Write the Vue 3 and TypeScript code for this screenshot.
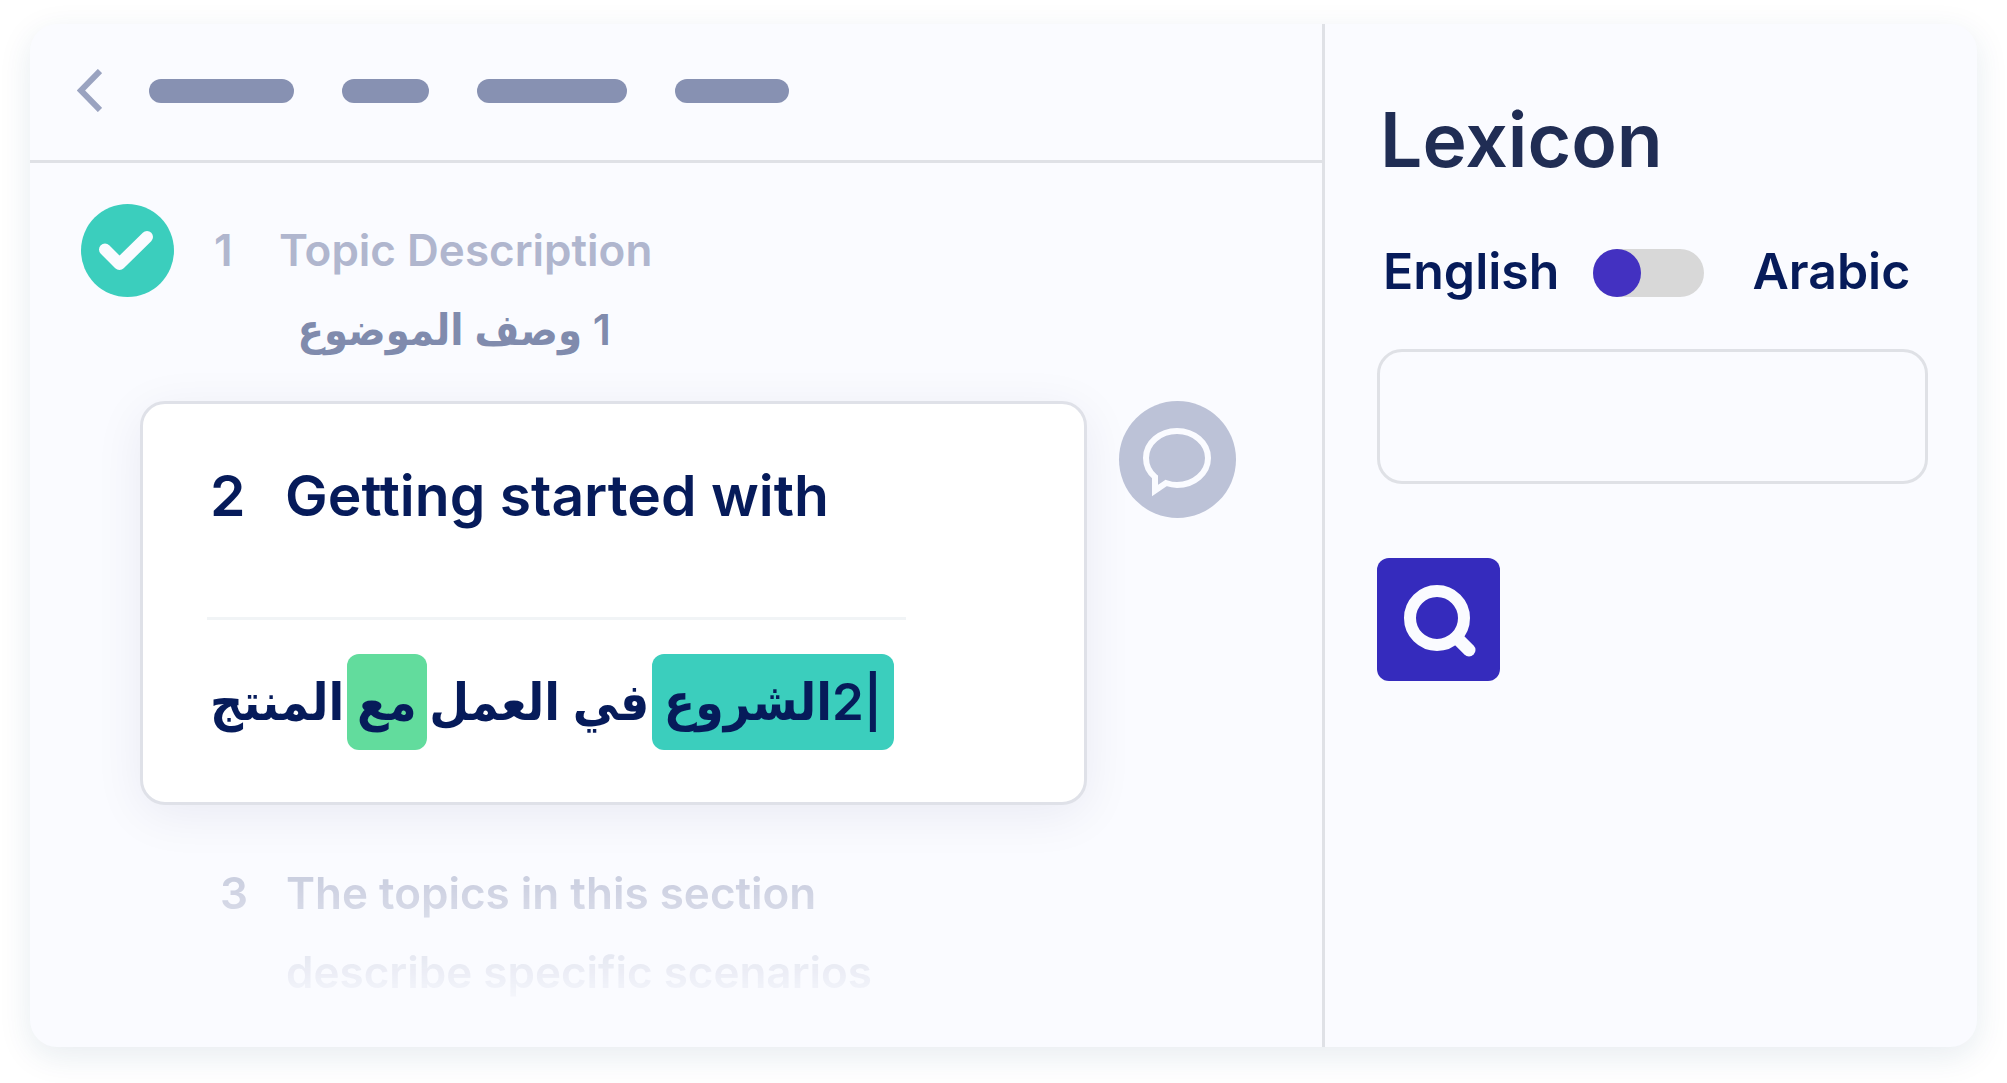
<script setup lang="ts">
import { ref } from 'vue'

interface Token {
  text: string
  mark?: 'teal' | 'green'
}

const crumbs: string[] = ['long', 'short', 'longest', 'medium']

const translation: Token[] = [
  { text: '|2الشروع', mark: 'teal' },
  { text: 'في العمل' },
  { text: 'مع', mark: 'green' },
  { text: 'المنتج' },
]

const toArabic = ref<boolean>(false)
const term = ref<string>('')
</script>

<template>
  <div class="app">
    <main class="editor">
      <header class="topbar">
        <button class="back" type="button" aria-label="Back">
          <svg width="25" height="43" viewBox="0 0 25 43">
            <path d="M23 2 L4 21.500 L23 41" fill="none" stroke="#9aa3c0" stroke-width="6" />
          </svg>
        </button>
        <nav class="crumbs">
          <span v-for="c in crumbs" :key="c" class="crumb" :class="c"></span>
        </nav>
      </header>

      <section class="topic done">
        <svg class="check" width="93" height="93" viewBox="0 0 93 93">
          <circle cx="46.500" cy="46.500" r="46.500" fill="#3bcebd" />
          <path d="M24 45.500 L38.500 60 L66 33" fill="none" stroke="#fafbff" stroke-width="12" stroke-linecap="round" stroke-linejoin="round" />
        </svg>
        <span class="num">1</span>
        <div class="lines">
          <p class="source">Topic Description</p>
          <p class="target" dir="rtl" lang="ar">1 وصف الموضوع</p>
        </div>
      </section>

      <div class="active">
        <section class="card">
          <h2 class="title"><span class="index">2</span><span>Getting started with</span></h2>
          <hr class="rule" />
          <p class="translation" dir="rtl" lang="ar">
            <span v-for="t in translation" :key="t.text" class="token" :class="t.mark">{{ t.text }}</span>
          </p>
        </section>
        <button class="comment" type="button" aria-label="Comment">
          <svg width="117" height="117" viewBox="0 0 117 117">
            <path
              d="M36 76 C30 71 27 64 27 57 C27 42 41 30 58 30 C75 30 89 42 89 57 C89 72 75 84 58 84 C54 84 50 83 47 82 L36 89.500 Z"
              fill="none" stroke="#fafbff" stroke-width="6" />
          </svg>
        </button>
      </div>

      <section class="topic next">
        <span class="num">3</span>
        <p class="source">The topics in this section<br />describe specific scenarios</p>
      </section>
    </main>

    <aside class="lexicon">
      <h1>Lexicon</h1>
      <div class="direction">
        <label for="direction">English</label>
        <input id="direction" v-model="toArabic" class="switch" type="checkbox" role="switch" />
        <label for="direction">Arabic</label>
      </div>
      <input v-model="term" class="term" type="text" aria-label="Term" />
      <button class="search" type="button" aria-label="Search">
        <svg width="123" height="123" viewBox="0 0 123 123">
          <circle cx="60" cy="60" r="27" fill="none" stroke="#fafbff" stroke-width="12" />
          <path d="M80 80 L92 92" stroke="#fafbff" stroke-width="13" stroke-linecap="round" />
        </svg>
      </button>
    </aside>
  </div>
</template>

<style>
body {
  background: #fff;
}
</style>

<style scoped>
.app {
  display: grid;
  grid-template-columns: minmax(0, 1292fr) minmax(0, 655fr);
  margin: 24px 30px 36px;
  border-radius: 27px;
  background: #fafbff;
  box-shadow: 0 9px 33px rgba(20, 70, 110, 0.1);
  font-family: Inter, "DejaVu Sans Condensed", "DejaVu Sans", sans-serif;
  font-weight: 600;
  color: #061b5a;
}

h1,
h2,
p {
  margin: 0;
  font-weight: inherit;
}

svg {
  display: block;
}

button {
  padding: 0;
  border: 0;
  background: none;
  cursor: pointer;
}

.topbar {
  display: flex;
  align-items: center;
  gap: 47px;
  box-sizing: border-box;
  height: 139px;
  padding: 0 0 3px 47px;
  border-bottom: 3px solid #dfe1e6;
}

.crumbs {
  display: flex;
  gap: 48px;
}

.crumb {
  height: 24px;
  border-radius: 12px;
  background: #8791b2;
}

.long {
  width: 145px;
}

.short {
  width: 87px;
}

.longest {
  width: 150px;
}

.medium {
  width: 114px;
}

.topic {
  display: flex;
  color: #b0b6ce;
  font-size: 44px;
}

.num {
  width: 66px;
}

.done {
  padding: 41px 0 0 51px;
}

.done .num {
  margin-left: 40px;
  width: 65px;
  line-height: 93px;
}

.done .source {
  line-height: 93px;
}

.target {
  width: 332px;
  height: 64px;
  line-height: 64px;
  font-size: 43px;
  white-space: nowrap;
  color: #808bad;
}

.active {
  display: flex;
  align-items: flex-start;
  gap: 32px;
  margin-top: 40px;
  padding: 0 86px 0 110px;
}

.card {
  flex: 1;
  min-width: 0;
  padding: 52px 178px 52px 64px;
  border: 3px solid #dfe1e8;
  border-radius: 25px;
  background: #fff;
  box-shadow: 0 10px 50px rgba(20, 20, 80, 0.07);
}

.title {
  display: flex;
  padding-left: 3px;
  font-size: 57px;
  line-height: 80px;
  white-space: nowrap;
}

.index {
  width: 75px;
}

.rule {
  height: 3px;
  margin: 81px 0 34px;
  border: 0;
  background: #f1f4f6;
}

.translation {
  display: flex;
  justify-content: space-between;
  height: 96px;
  padding: 0 12px 0 3px;
  font-size: 51px;
  line-height: 96px;
  white-space: nowrap;
}

.token {
  border-radius: 12px;
}

.teal {
  padding: 0 12px;
  background: #3bcebd;
}

.green {
  padding: 0 10px;
  background: #62dc9d;
}

.comment {
  width: 117px;
  height: 117px;
  border-radius: 50%;
  background: #bcc2d7;
}

.next {
  margin-top: 49px;
  padding: 0 0 35px 190px;
  line-height: 79px;
  mask-image: linear-gradient(rgba(0, 0, 0, 0.75), transparent 158px);
}

.lexicon {
  padding: 76px 49px 0 52px;
  border-left: 3px solid #dfe1e6;
}

h1 {
  padding-left: 3px;
  font-size: 75px;
  line-height: 80px;
  color: #202d54;
}

.direction {
  display: flex;
  align-items: center;
  height: 80px;
  margin: 53px 0 36px;
  padding-left: 6px;
  font-size: 50px;
}

.direction label {
  padding-bottom: 4px;
}

.switch {
  appearance: none;
  display: flex;
  width: 111px;
  height: 48px;
  margin: 0 48px 0 34px;
  border-radius: 24px;
  background: #d8d8d8;
  cursor: pointer;
}

.switch::before {
  content: "";
  width: 48px;
  height: 48px;
  border-radius: 50%;
  background: #4331c1;
}

.switch:checked {
  justify-content: flex-end;
}

.term {
  display: block;
  box-sizing: border-box;
  width: 100%;
  height: 135px;
  padding: 0 32px;
  border: 3px solid #dfe1e6;
  border-radius: 25px;
  background: transparent;
  font: inherit;
  font-size: 50px;
  color: inherit;
}

.search {
  margin-top: 74px;
  border-radius: 12px;
  background: #352bbd;
}
</style>
